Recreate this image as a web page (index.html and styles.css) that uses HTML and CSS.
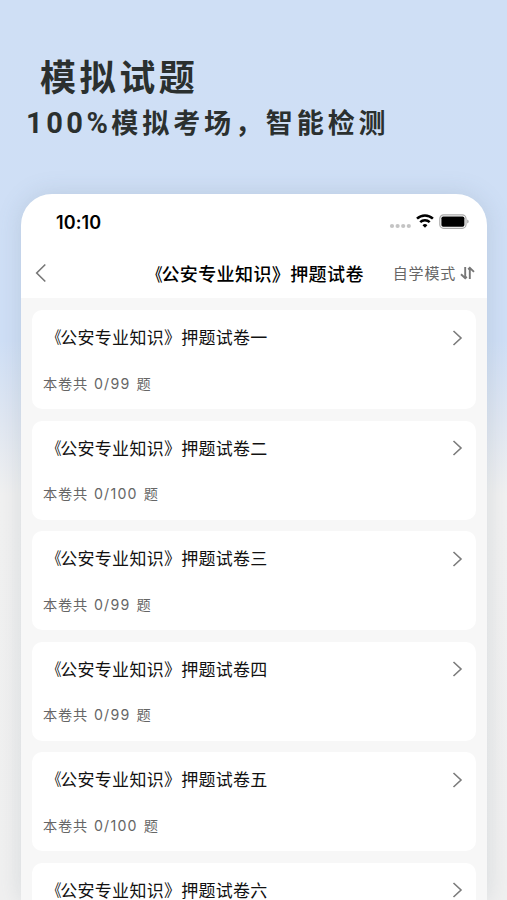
FILE: index.html
```html
<!DOCTYPE html>
<html lang="zh-CN">
<head>
<meta charset="utf-8">
<title>模拟试题</title>
<link rel="stylesheet" href="styles.css">
</head>
<body>
<header class="promo">
  <h1 class="promo-title">模拟试题</h1>
  <p class="promo-sub"><span class="percent">100%</span>模拟考场，智能检测</p>
</header>
<main class="phone">
  <div class="status">
    <span class="time">10:10</span>
    <svg class="status-icons" width="80" height="18" viewBox="0 0 80 18">
      <g fill="#c4c4c4"><circle cx="3" cy="13" r="2.1"/><circle cx="8.6" cy="13" r="2.1"/><circle cx="14.2" cy="13" r="2.1"/><circle cx="19.8" cy="13" r="2.1"/></g>
      <g fill="none" stroke="#000" stroke-width="2.5"><path d="M28 5.7a11.3 11.3 0 0 1 15.9 0"/><path d="M31.2 9.2a6.8 6.8 0 0 1 9.5 0"/></g>
      <path d="M33.5 12.2a3.5 3.5 0 0 1 4.9 0L36 14.8z" fill="#000"/>
      <rect x="50.8" y="1.9" width="26.2" height="13.4" rx="3.8" fill="#fff" stroke="#aaa" stroke-width="1.2"/>
      <rect x="52.4" y="3.5" width="23" height="10.2" rx="1.8" fill="#000"/>
      <path d="M78.3 6.6v4q1.3-.6 1.3-2t-1.3-2z" fill="#999"/>
    </svg>
  </div>
  <nav class="nav">
    <svg class="back" width="12" height="20" viewBox="0 0 12 20"><path d="M10.3 1.5 1.7 10l8.6 8.5"/></svg>
    <h2 class="nav-title"><span class="open">《</span>公安专业知识》押题试卷</h2>
    <div class="mode"><span>自学模式</span>
      <svg width="15" height="14" viewBox="0 0 15 14"><path d="M5.2 1v11M1 8.2l4.2 4 1.6-1.5M9.8 13V2M8.2 3.5l1.6-1.6 4.2 4"/></svg>
    </div>
  </nav>
  <div class="list">
    <section class="card"><div class="row"><h3><span class="open">《</span>公安专业知识》押题试卷一</h3><svg class="chev" width="11" height="18" viewBox="0 0 11 18"><path d="m1.5 2 7.5 7-7.5 7"/></svg></div><p><span>本卷共</span><span class="num">0/99</span><span>题</span></p></section>
    <section class="card"><div class="row"><h3><span class="open">《</span>公安专业知识》押题试卷二</h3><svg class="chev" width="11" height="18" viewBox="0 0 11 18"><path d="m1.5 2 7.5 7-7.5 7"/></svg></div><p><span>本卷共</span><span class="num">0/100</span><span>题</span></p></section>
    <section class="card"><div class="row"><h3><span class="open">《</span>公安专业知识》押题试卷三</h3><svg class="chev" width="11" height="18" viewBox="0 0 11 18"><path d="m1.5 2 7.5 7-7.5 7"/></svg></div><p><span>本卷共</span><span class="num">0/99</span><span>题</span></p></section>
    <section class="card"><div class="row"><h3><span class="open">《</span>公安专业知识》押题试卷四</h3><svg class="chev" width="11" height="18" viewBox="0 0 11 18"><path d="m1.5 2 7.5 7-7.5 7"/></svg></div><p><span>本卷共</span><span class="num">0/99</span><span>题</span></p></section>
    <section class="card"><div class="row"><h3><span class="open">《</span>公安专业知识》押题试卷五</h3><svg class="chev" width="11" height="18" viewBox="0 0 11 18"><path d="m1.5 2 7.5 7-7.5 7"/></svg></div><p><span>本卷共</span><span class="num">0/100</span><span>题</span></p></section>
    <section class="card"><div class="row"><h3><span class="open">《</span>公安专业知识》押题试卷六</h3><svg class="chev" width="11" height="18" viewBox="0 0 11 18"><path d="m1.5 2 7.5 7-7.5 7"/></svg></div></section>
  </div>
</main>
</body>
</html>
```
FILE: styles.css
```css
* { box-sizing: border-box; margin: 0; padding: 0; }
body {
  height: 900px;
  overflow: hidden;
  display: flex;
  flex-direction: column;
  background: linear-gradient(#cfdff5 0, #cfdff6 340px, #e0e7f2 420px, #f1f1f1 495px, #f0f0f0 100%);
  font-family: "Noto Sans CJK SC", sans-serif;
}
h1, h2, h3, p, span { white-space: nowrap; }
svg { display: block; flex: none; }
.promo { height: 194px; flex: none; padding-top: 50px; color: #2b302f; }
.promo-title { padding-left: 40px; font-size: 36px; line-height: 50px; letter-spacing: 3.6px; }
.promo-sub { padding-left: 26px; margin-top: 3px; font-size: 27px; font-weight: 700; line-height: 38px; letter-spacing: 3.9px; }
.percent { font-family: Roboto, sans-serif; font-size: 29px; letter-spacing: 3.5px; }
.phone {
  width: 466px;
  height: 706px;
  flex: none;
  margin-left: 21px;
  border-radius: 31px 31px 0 0;
  background: #fff;
  box-shadow: 0 0 24px rgba(90, 110, 130, .18);
  overflow: hidden;
}
.status { height: 54px; display: flex; justify-content: space-between; padding: 17px 18px 0 35px; }
.time { font: 600 18px/23px Inter, sans-serif; letter-spacing: .1px; color: #000; }
.status-icons { margin-top: 2px; }
.nav { height: 50px; display: grid; grid-template-columns: 108px 235px 1fr; align-items: center; padding: 0 12px 0 14px; }
.back { fill: none; stroke: #777; stroke-width: 1.6; }
.nav-title { font-size: 18px; font-weight: 500; letter-spacing: .4px; line-height: 28px; color: #000; }
.open { display: inline-block; transform: translateX(1.5px) scaleX(.82); transform-origin: right; }
.mode { display: flex; align-items: center; justify-content: flex-end; gap: 4px; font-size: 15px; letter-spacing: .8px; color: #666; }
.mode span { margin-bottom: 2px; }
.mode svg { fill: none; stroke: #777; stroke-width: 1.9; }
.list { height: 602px; padding: 12px 11px 0; display: flex; flex-direction: column; gap: 11.5px; background: #f7f7f7; }
.card { height: 99px; flex: none; padding: 14px 13px 0 11px; border-radius: 10px; background: #fff; }
.row { display: flex; justify-content: space-between; align-items: center; height: 27px; }
.row h3 { font-size: 17px; font-weight: 400; letter-spacing: .28px; line-height: 25px; margin-bottom: 2px; color: #111; }
.chev { fill: none; stroke: #7b7b7b; stroke-width: 1.6; }
.card p { display: flex; gap: 6px; margin-top: 21.5px; font-size: 14.2px; line-height: 20px; letter-spacing: .8px; color: #666; }
.num { font-family: Inter, sans-serif; letter-spacing: 1.2px; line-height: 21px; }
```
